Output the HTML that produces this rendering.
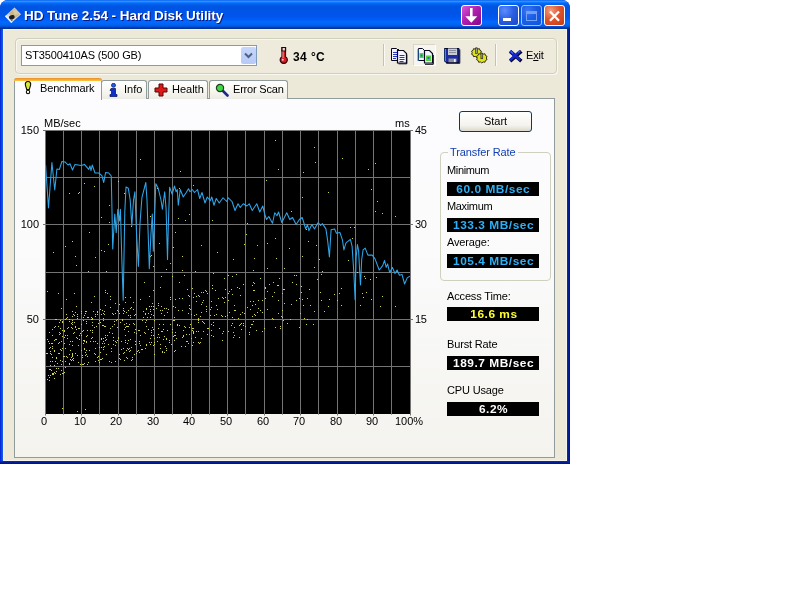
<!DOCTYPE html>
<html>
<head>
<meta charset="utf-8">
<title>HD Tune 2.54 - Hard Disk Utility</title>
<style>
html,body{margin:0;padding:0;background:#fff;}
body{width:800px;height:600px;position:relative;overflow:hidden;-webkit-font-smoothing:antialiased;font-family:"Liberation Sans",sans-serif;font-size:11px;color:#000;}
.abs{position:absolute;}
#win{position:absolute;left:0;top:0;width:570px;height:464px;background:#0831d9;border-radius:8px 8px 0 0;overflow:hidden;}
#title{position:absolute;left:0;top:0;width:570px;height:29px;
 background:linear-gradient(to bottom,#0058ee 0%,#3593ff 4%,#288eff 6%,#127dff 8%,#036ffc 10%,#0262ee 14%,#0057e5 20%,#0054e3 24%,#0055eb 56%,#005bf5 66%,#026afe 76%,#0062ef 86%,#0052d6 92%,#0040ab 94%,#003092 100%);}
#title .txt{position:absolute;left:24px;top:8px;color:#fff;font-weight:bold;font-size:13.5px;line-height:16px;white-space:nowrap;text-shadow:1px 1px 0 #0a1883;letter-spacing:-0.05px;}
#client{position:absolute;left:3px;top:29px;width:564px;height:432px;box-sizing:border-box;background:#ece9d8;border:1px solid #f4f3ec;}
.lb{position:absolute;left:0;top:29px;width:3px;height:435px;background:linear-gradient(to right,#0019cf 0,#0a3ee0 1px,#1660ea 3px);}
.rb{position:absolute;left:567px;top:29px;width:3px;height:435px;background:linear-gradient(to right,#0830b8 0,#04209c 1px,#001284 3px);}
.bb{position:absolute;left:0;top:461px;width:570px;height:3px;background:linear-gradient(to bottom,#0830b8 0,#04209c 1px,#001284 3px);}
.cbtn{position:absolute;top:5px;width:21px;height:21px;border-radius:3px;border:1px solid #fff;box-sizing:border-box;}
.blue{background:radial-gradient(circle at 30% 25%,#5b8dff 0%,#2a5fe3 45%,#1a47c8 100%);}
.red{background:radial-gradient(circle at 30% 25%,#f0a080 0%,#e0552c 45%,#c23a18 100%);}
.purp{background:linear-gradient(135deg,#d858d8 0%,#b020b0 45%,#86088a 100%);}
/* toolbar group */
#tbgrp{position:absolute;left:15px;top:38px;width:542px;height:36px;border:1px solid #d0d0bf;border-radius:4px;box-sizing:border-box;background:#eeebdd;box-shadow:1px 1px 0 #f8f7f0, inset 1px 1px 0 #f8f7f0;}
#combo{position:absolute;left:21px;top:45px;width:236px;height:21px;box-sizing:border-box;border:1px solid #7f9db9;background:#fff;}
#combo .t{position:absolute;left:3px;top:3px;font-size:11px;line-height:13px;white-space:nowrap;letter-spacing:-0.15px;}
#combo .dd{position:absolute;right:0px;top:1px;width:15px;height:17px;border-radius:2px;background:linear-gradient(to bottom,#c6d6fc,#b7c9f7);}
.sep{position:absolute;top:44px;width:1px;height:22px;background:#c5c2b0;border-right:1px solid #fbfaf4;}
/* tabs */
.tab{position:absolute;top:80px;height:19px;box-sizing:border-box;border:1px solid #919b9c;border-bottom:none;border-radius:3px 3px 0 0;background:linear-gradient(to bottom,#ffffff 0%,#f6f5ef 60%,#ecebe4 100%);}
.tab.sel{top:78px;height:22px;background:#fcfcfe;border-top:none;z-index:3;}
.tab.sel:before{content:"";position:absolute;left:-1px;right:-1px;top:0;height:3px;border-radius:3px 3px 0 0;background:linear-gradient(to bottom,#e68b2c,#ffc73c);}
.tab .l{position:absolute;top:2px;font-size:11px;line-height:13px;white-space:nowrap;}
.tab.sel .l{top:4px;}
#pane{position:absolute;left:14px;top:98px;width:541px;height:360px;box-sizing:border-box;border:1px solid #919b9c;background:linear-gradient(to bottom,#fcfcfe 0%,#fbfbfc 40%,#f4f3ee 100%);}
.ax{position:absolute;font-size:11px;line-height:11px;white-space:nowrap;color:#000;}
.lbl{position:absolute;left:447px;font-size:11px;line-height:11px;white-space:nowrap;letter-spacing:-0.15px;}
.box{position:absolute;left:447px;width:92px;height:14px;background:#000;text-align:center;font-weight:bold;font-size:11px;line-height:14px;white-space:nowrap;}
.box span{display:inline-block;transform:scaleX(1.08);letter-spacing:0.5px;margin-left:1px;}
#grp{position:absolute;left:440px;top:152px;width:111px;height:129px;box-sizing:border-box;border:1px solid #d0d0bf;border-radius:4px;}
#grp .cap{position:absolute;left:7px;top:-6px;padding:0 2px;background:#fafafb;color:#1440b4;letter-spacing:-0.1px;font-size:11px;line-height:11px;white-space:nowrap;}
#start{position:absolute;left:459px;top:111px;width:73px;height:21px;box-sizing:border-box;border:1px solid #003c74;border-radius:3px;background:linear-gradient(to bottom,#ffffff 0%,#f4f3ee 70%,#dcd8cc 100%);text-align:center;font-size:11px;line-height:19px;}
</style>
</head>
<body>
<div id="root" style="position:absolute;left:0;top:0;width:800px;height:600px;will-change:transform;">
<div id="win">
  <div id="title">
    <svg class="abs" style="left:0;top:0" width="30" height="29" viewBox="0 0 30 29">
      <path d="M14.500 7.500L21 14.300L11.300 23L5 16.300Z" fill="#cfd8ea"/>
      <path d="M14.600 8.600L19.800 14.200L14.200 19.200L8.600 13.600Z" fill="#c9b488"/>
      <path d="M12.500 10.500L16.500 9.800L18.800 13.800L15 15.500Z" fill="#d8c9a4"/>
      <ellipse cx="11.800" cy="17.300" rx="2.900" ry="2.100" fill="#1c1c20" transform="rotate(-20 11.800 17.300)"/>
      <path d="M9.500 19.200L13.200 19.400L11.300 21.800Z" fill="#5a6a4c"/>
      <path d="M5 16.300L11.300 23L12.300 22L6.200 15.200Z" fill="#eef2fa"/>
    </svg>
    <div class="txt">HD Tune 2.54 - Hard Disk Utility</div>
    <div class="cbtn purp" style="left:461px">
      <svg class="abs" style="left:0;top:0" width="19" height="19" viewBox="0 0 19 19"><path d="M9.300 2V13" stroke="#fff" stroke-width="2.600" fill="none"/><path d="M3.300 10.200h12l-6 6.600z" fill="#fff"/></svg>
    </div>
    <div class="cbtn blue" style="left:498px"><div class="abs" style="left:4px;top:12px;width:8px;height:3px;background:#fff"></div></div>
    <div class="cbtn blue" style="left:521px;opacity:.62"><div class="abs" style="left:4px;top:5px;width:11px;height:10px;border:1px solid #b9cdf6;border-top-width:3px;box-sizing:border-box"></div></div>
    <div class="cbtn red" style="left:544px">
      <svg class="abs" style="left:0;top:0" width="19" height="19" viewBox="0 0 19 19"><path d="M5 5.500L14 14.800M14 5.500L5 14.800" stroke="#fff" stroke-width="2.300" fill="none"/></svg>
    </div>
  </div>
  <div id="client"></div>
  <div class="lb"></div><div class="rb"></div><div class="bb"></div>
</div>

<!-- toolbar -->
<div id="tbgrp"></div>
<div id="combo"><div class="t">ST3500410AS (500 GB)</div>
  <div class="dd"><svg class="abs" style="left:0;top:0" width="15" height="17" viewBox="0 0 15 17"><path d="M4 6.5L7.5 10L11 6.5" stroke="#4d6185" stroke-width="2" fill="none"/></svg></div>
</div>
<!-- thermometer -->
<svg class="abs" style="left:278px;top:46px" width="12" height="19" viewBox="0 0 12 19">
  <path d="M4 1.500h3.500v9.200a3.600 3.600 0 1 1 -3.500 0z" fill="#dc1820" stroke="#2a0608" stroke-width="1.200"/>
  <path d="M4 1.500h3.500v3.500h-3.500z" fill="#f4d8d8" stroke="#2a0608" stroke-width="1.200"/>
  <path d="M5 5.500v6.500" stroke="#f8a8a8" stroke-width="1" fill="none"/>
  <circle cx="4.800" cy="13.800" r="1" fill="#fbd0d0"/>
</svg>
<div class="abs" style="left:293px;top:50px;font-weight:bold;font-size:12px;line-height:14px;white-space:nowrap;letter-spacing:0.4px;">34 °C</div>
<div class="sep" style="left:383px"></div>
<!-- icons -->
<div class="abs" style="left:413px;top:44px;width:23px;height:22px;box-sizing:border-box;border:1px solid #d9d6c8;background:#f6f5ef;border-right-color:#fdfdfa;border-bottom-color:#fdfdfa;"></div>
<svg class="abs" style="left:385px;top:42px" width="140" height="26" viewBox="385 42 140 26">
  <!-- copy text -->
  <path d="M391.500 48.500h5l2 2v10h-7z" fill="#f4f4ff" stroke="#08081c" stroke-width="1"/>
  <path d="M398.500 49v12.500" stroke="#08081c" stroke-width="1"/>
  <path d="M393 52.500h4M393 54.500h4M393 56.500h4M393 58.500h3" stroke="#2834c4" stroke-width="1"/>
  <path d="M397.500 50.500h6l3 3v9.500h-9z" fill="#f4f4ff" stroke="#08081c" stroke-width="1.200"/>
  <path d="M406.800 54.500v9.300h-8.300" stroke="#08081c" stroke-width="1" fill="none"/>
  <path d="M399.500 55.500h5M399.500 57.500h5M399.500 59.500h5M399.500 61.500h4" stroke="#2834c4" stroke-width="1"/>
  <!-- copy image -->
  <path d="M418.500 48.500h4l2 2v10h-6z" fill="#f4f4ff" stroke="#08081c" stroke-width="1"/>
  <rect x="419.500" y="53" width="4" height="5" fill="#58d040"/>
  <path d="M418 49v12" stroke="#2c80e0" stroke-width="1"/>
  <path d="M424.500 50.500h5l3 3v9.500h-8z" fill="#f4f4ff" stroke="#08081c" stroke-width="1.200"/>
  <path d="M433.300 55v9.300h-8.300" stroke="#08081c" stroke-width="1" fill="none"/>
  <rect x="426" y="55.500" width="5" height="5.500" fill="#58d040"/>
  <rect x="427.500" y="57" width="2" height="2" fill="#2868d8"/><rect x="420.500" y="54.500" width="2" height="2" fill="#2868d8"/>
  <!-- floppy -->
  <path d="M444.500 48.500h14.500v14h-13l-1.500 -1.500z" fill="#1c2ca4" stroke="#060a30" stroke-width="1"/>
  <path d="M445.300 49v12" stroke="#3ca0e8" stroke-width="1.200"/>
  <rect x="448" y="48.500" width="9" height="6.500" fill="#c8ccd4"/>
  <path d="M449 50.500h7M449 52.500h7" stroke="#8c909c" stroke-width="1"/>
  <rect x="448.500" y="58.500" width="8" height="3.800" fill="#8c909c"/>
  <rect x="454" y="59" width="1.600" height="3" fill="#f4f4f4"/>
  <path d="M459.800 49.500v13.800h-13.500" stroke="#060a30" stroke-width="1" fill="none"/>
  <!-- gears -->
  <g stroke="#20200a" stroke-width="1.100">
   <path transform="translate(476.500 52.700) scale(.82) translate(-476.500 -53.500)" d="M476.500 47.800l1.600 1.200l2-.4l.6 2l1.800 1l-.8 1.900l.8 1.900l-1.800 1l-.6 2l-2-.4l-1.600 1.200l-1.600-1.200l-2 .4l-.6-2l-1.800-1l.8-1.900l-.8-1.900l1.800-1l.6-2l2 .4z" fill="#e2e218"/>
   <path transform="translate(481.800 58) scale(.82) translate(-481.500 -58.400)" d="M481.500 52.300l1.700 1.300l2.100-.4l.7 2.100l1.900 1.100l-.9 2l.9 2l-1.900 1.100l-.7 2.100l-2.100-.4l-1.700 1.300l-1.700-1.300l-2.100.4l-.7-2.100l-1.900-1.100l.9-2l-.9-2l1.900-1.100l.7-2.100l2.100.4z" fill="#e2e218"/>
  </g>
  <rect x="475.600" y="48" width="1.800" height="5.500" fill="#98a094" stroke="#30342c" stroke-width=".7"/>
  <rect x="480.900" y="53.200" width="1.800" height="5.500" fill="#98a094" stroke="#30342c" stroke-width=".7"/>
  <!-- exit X -->
  <path d="M511.500 52.500L520 60M520 52.500L511.500 60" stroke="#05051c" stroke-width="3.600" stroke-linecap="square"/>
  <path d="M511 51.800L519.300 59.300M519.300 51.800L511 59.300" stroke="#1424cc" stroke-width="2.700" stroke-linecap="square"/>
  <path d="M510.600 51.300L513 53.400M518.200 52.400L519.700 51.200" stroke="#5c8cf0" stroke-width="1"/>
</svg>
<div class="sep" style="left:495px"></div>
<div class="abs" style="left:526px;top:49px;letter-spacing:-0.2px;font-size:11px;line-height:13px;white-space:nowrap;">E<u>x</u>it</div>

<!-- tabs -->
<div id="pane"></div>
<div class="tab sel" style="left:14px;width:88px;">
  <svg class="abs" style="left:8px;top:2px" width="10" height="16" viewBox="0 0 10 16"><path d="M5 1.500c2.200 0 3 1.800 2.600 3.600l-1.300 4.400h-2.600l-1.300 -4.400c-.4 -1.800 .4 -3.600 2.600 -3.600z" fill="#d8e838" stroke="#0c0c04" stroke-width="1.100"/><circle cx="5" cy="12" r="1.700" fill="#fff" stroke="#0c0c04" stroke-width="1.100"/></svg>
  <div class="l" style="left:25px;letter-spacing:-0.15px">Benchmark</div>
</div>
<div class="tab" style="left:101px;width:46px;">
  <svg class="abs" style="left:7px;top:2px" width="9" height="14" viewBox="0 0 9 14"><circle cx="4.500" cy="2.300" r="2" fill="#2060e8" stroke="#0a1a70" stroke-width="0.800"/><path d="M2 5.500h4.500v6h1.500v2h-7v-2h1.500v-4h-1.500z" fill="#1030c8" stroke="#0a1a70" stroke-width="0.800"/></svg>
  <div class="l" style="left:22px">Info</div>
</div>
<div class="tab" style="left:148px;width:60px;">
  <svg class="abs" style="left:5px;top:2px" width="14" height="14" viewBox="0 0 14 14"><path d="M5 1h4v4h4v4h-4v4h-4v-4h-4v-4h4z" fill="#e01818" stroke="#500808" stroke-width="1"/></svg>
  <div class="l" style="left:23px">Health</div>
</div>
<div class="tab" style="left:209px;width:79px;">
  <svg class="abs" style="left:5px;top:2px" width="14" height="14" viewBox="0 0 14 14"><path d="M7.500 7.500L12.500 12.500" stroke="#1a2a90" stroke-width="2.600" stroke-linecap="round"/><circle cx="5" cy="5" r="3.600" fill="#40d848" stroke="#204020" stroke-width="1.200"/></svg>
  <div class="l" style="left:23px;letter-spacing:-0.2px">Error Scan</div>
</div>

<!-- chart -->
<svg class="chart" width="420" height="300" viewBox="20 125 420 300" style="position:absolute;left:20px;top:125px">
<rect x="45.0" y="130.0" width="366.0" height="284.0" fill="#000"/>
<path d="M45.5 130.0V415.5M63.5 130.0V414.7M81.5 130.0V415.5M99.5 130.0V414.7M118.5 130.0V415.5M136.5 130.0V414.7M154.5 130.0V415.5M172.5 130.0V414.7M191.5 130.0V415.5M209.5 130.0V414.7M227.5 130.0V415.5M245.5 130.0V414.7M264.5 130.0V415.5M282.5 130.0V414.7M300.5 130.0V415.5M318.5 130.0V414.7M337.5 130.0V415.5M355.5 130.0V414.7M373.5 130.0V415.5M391.5 130.0V414.7M410.5 130.0V415.5M43.0 130.5H413.0M45.0 177.5H411.0M43.0 224.5H413.0M45.0 272.5H411.0M43.0 319.5H413.0M45.0 366.5H411.0" stroke="#747474" stroke-width="1" fill="none"/>
<path d="M171 344h1v1h-1zM100 359h1v1h-1zM121 341h1v1h-1zM284 303h1v1h-1zM303 305h1v1h-1zM275 327h1v1h-1zM145 313h1v1h-1zM243 325h1v1h-1zM104 311h1v1h-1zM113 340h1v1h-1zM49 380h1v1h-1zM66 356h1v1h-1zM233 332h1v1h-1zM175 307h1v1h-1zM217 309h1v1h-1zM102 343h1v1h-1zM119 358h1v1h-1zM283 320h1v1h-1zM95 341h1v1h-1zM173 320h1v1h-1zM139 343h1v1h-1zM76 329h1v1h-1zM194 315h1v1h-1zM123 313h1v1h-1zM86 350h1v1h-1zM49 377h1v1h-1zM147 317h1v1h-1zM229 312h1v1h-1zM301 292h1v1h-1zM81 335h1v1h-1zM64 356h1v1h-1zM92 332h1v1h-1zM113 337h1v1h-1zM69 319h1v1h-1zM134 324h1v1h-1zM282 293h1v1h-1zM100 309h1v1h-1zM72 353h1v1h-1zM154 320h1v1h-1zM321 300h1v1h-1zM222 333h1v1h-1zM283 289h1v1h-1zM240 324h1v1h-1zM153 309h1v1h-1zM267 309h1v1h-1zM119 313h1v1h-1zM72 322h1v1h-1zM184 326h1v1h-1zM161 306h1v1h-1zM52 373h1v1h-1zM219 328h1v1h-1zM198 318h1v1h-1zM111 348h1v1h-1zM363 297h1v1h-1zM159 324h1v1h-1zM52 343h1v1h-1zM125 327h1v1h-1zM95 361h1v1h-1zM60 333h1v1h-1zM64 330h1v1h-1zM153 335h1v1h-1zM253 301h1v1h-1zM280 328h1v1h-1zM207 334h1v1h-1zM166 350h1v1h-1zM395 306h1v1h-1zM255 315h1v1h-1zM317 279h1v1h-1zM106 354h1v1h-1zM192 328h1v1h-1zM160 348h1v1h-1zM67 317h1v1h-1zM136 333h1v1h-1zM264 328h1v1h-1zM166 339h1v1h-1zM71 360h1v1h-1zM321 274h1v1h-1zM123 353h1v1h-1zM120 359h1v1h-1zM123 308h1v1h-1zM65 335h1v1h-1zM189 327h1v1h-1zM223 298h1v1h-1zM122 319h1v1h-1zM169 340h1v1h-1zM73 314h1v1h-1zM67 328h1v1h-1zM72 328h1v1h-1zM200 316h1v1h-1zM162 352h1v1h-1zM314 311h1v1h-1zM190 309h1v1h-1zM52 357h1v1h-1zM55 326h1v1h-1zM52 361h1v1h-1zM203 331h1v1h-1zM211 330h1v1h-1zM104 314h1v1h-1zM69 344h1v1h-1zM99 320h1v1h-1zM265 298h1v1h-1zM59 334h1v1h-1zM83 340h1v1h-1zM218 298h1v1h-1zM168 309h1v1h-1zM50 361h1v1h-1zM151 306h1v1h-1zM87 356h1v1h-1zM241 329h1v1h-1zM59 332h1v1h-1zM232 294h1v1h-1zM49 348h1v1h-1zM163 324h1v1h-1zM239 337h1v1h-1zM50 347h1v1h-1zM123 310h1v1h-1zM143 311h1v1h-1zM71 357h1v1h-1zM192 330h1v1h-1zM196 314h1v1h-1zM190 324h1v1h-1zM239 288h1v1h-1zM163 329h1v1h-1zM112 313h1v1h-1zM146 308h1v1h-1zM128 331h1v1h-1zM124 360h1v1h-1zM142 349h1v1h-1zM364 276h1v1h-1zM221 315h1v1h-1zM87 335h1v1h-1zM170 324h1v1h-1zM117 319h1v1h-1zM252 305h1v1h-1zM193 331h1v1h-1zM79 339h1v1h-1zM116 320h1v1h-1zM58 353h1v1h-1zM107 335h1v1h-1zM126 323h1v1h-1zM139 330h1v1h-1zM133 309h1v1h-1zM91 317h1v1h-1zM54 365h1v1h-1zM117 310h1v1h-1zM69 363h1v1h-1zM244 313h1v1h-1zM273 319h1v1h-1zM272 296h1v1h-1zM77 318h1v1h-1zM228 300h1v1h-1zM98 356h1v1h-1zM62 322h1v1h-1zM203 292h1v1h-1zM151 330h1v1h-1zM47 339h1v1h-1zM225 316h1v1h-1zM125 342h1v1h-1zM211 324h1v1h-1zM87 364h1v1h-1zM118 337h1v1h-1zM328 306h1v1h-1zM105 335h1v1h-1zM279 278h1v1h-1zM77 314h1v1h-1zM253 321h1v1h-1zM301 286h1v1h-1zM186 341h1v1h-1zM146 309h1v1h-1zM72 354h1v1h-1zM231 289h1v1h-1zM114 324h1v1h-1zM262 331h1v1h-1zM93 341h1v1h-1zM273 282h1v1h-1zM103 320h1v1h-1zM265 287h1v1h-1zM277 285h1v1h-1zM139 341h1v1h-1zM118 311h1v1h-1zM187 341h1v1h-1zM123 348h1v1h-1zM250 327h1v1h-1zM290 319h1v1h-1zM174 335h1v1h-1zM81 350h1v1h-1zM129 351h1v1h-1zM164 352h1v1h-1zM192 345h1v1h-1zM86 336h1v1h-1zM214 315h1v1h-1zM55 373h1v1h-1zM72 345h1v1h-1zM130 315h1v1h-1zM153 329h1v1h-1zM93 311h1v1h-1zM166 308h1v1h-1zM90 330h1v1h-1zM150 338h1v1h-1zM287 323h1v1h-1zM274 292h1v1h-1zM191 338h1v1h-1zM265 288h1v1h-1zM64 337h1v1h-1zM183 336h1v1h-1zM179 325h1v1h-1zM227 315h1v1h-1zM188 295h1v1h-1zM50 353h1v1h-1zM194 293h1v1h-1zM175 332h1v1h-1zM382 296h1v1h-1zM134 332h1v1h-1zM210 315h1v1h-1zM360 305h1v1h-1zM262 312h1v1h-1zM299 327h1v1h-1zM176 338h1v1h-1zM112 333h1v1h-1zM83 330h1v1h-1zM88 317h1v1h-1zM154 338h1v1h-1zM48 375h1v1h-1zM87 330h1v1h-1zM296 284h1v1h-1zM61 341h1v1h-1zM86 321h1v1h-1zM235 310h1v1h-1zM128 315h1v1h-1zM74 322h1v1h-1zM112 313h1v1h-1zM94 327h1v1h-1zM199 343h1v1h-1zM238 318h1v1h-1zM253 290h1v1h-1zM117 327h1v1h-1zM104 326h1v1h-1zM131 360h1v1h-1zM75 326h1v1h-1zM128 331h1v1h-1zM98 360h1v1h-1zM85 352h1v1h-1zM272 318h1v1h-1zM86 354h1v1h-1zM85 313h1v1h-1zM130 339h1v1h-1zM133 323h1v1h-1zM80 333h1v1h-1zM101 359h1v1h-1zM231 325h1v1h-1zM84 349h1v1h-1zM115 361h1v1h-1zM282 317h1v1h-1zM96 326h1v1h-1zM95 348h1v1h-1zM125 335h1v1h-1zM136 353h1v1h-1zM61 364h1v1h-1zM49 332h1v1h-1zM329 299h1v1h-1zM72 316h1v1h-1zM140 345h1v1h-1zM206 291h1v1h-1zM206 311h1v1h-1zM234 310h1v1h-1zM52 373h1v1h-1zM72 341h1v1h-1zM62 336h1v1h-1zM199 296h1v1h-1zM132 359h1v1h-1zM366 292h1v1h-1zM139 343h1v1h-1zM234 319h1v1h-1zM173 306h1v1h-1zM376 277h1v1h-1zM69 364h1v1h-1zM56 339h1v1h-1zM60 360h1v1h-1zM158 334h1v1h-1zM46 353h1v1h-1zM161 331h1v1h-1zM185 346h1v1h-1zM254 290h1v1h-1zM182 298h1v1h-1zM193 332h1v1h-1zM126 350h1v1h-1zM158 303h1v1h-1zM62 330h1v1h-1zM103 313h1v1h-1zM54 350h1v1h-1zM88 362h1v1h-1zM86 341h1v1h-1zM82 331h1v1h-1zM181 346h1v1h-1zM56 371h1v1h-1zM135 341h1v1h-1zM178 310h1v1h-1zM49 369h1v1h-1zM99 347h1v1h-1zM117 340h1v1h-1zM223 331h1v1h-1zM207 293h1v1h-1zM129 348h1v1h-1zM59 322h1v1h-1zM139 352h1v1h-1zM213 336h1v1h-1zM166 348h1v1h-1zM196 331h1v1h-1zM115 313h1v1h-1zM83 343h1v1h-1zM148 329h1v1h-1zM157 337h1v1h-1zM281 316h1v1h-1zM50 375h1v1h-1zM128 326h1v1h-1zM65 361h1v1h-1zM186 334h1v1h-1zM151 332h1v1h-1zM52 335h1v1h-1zM64 372h1v1h-1zM309 289h1v1h-1zM61 350h1v1h-1zM111 362h1v1h-1zM153 306h1v1h-1zM71 323h1v1h-1zM50 369h1v1h-1zM250 327h1v1h-1zM124 324h1v1h-1zM54 340h1v1h-1zM100 322h1v1h-1zM138 330h1v1h-1zM301 286h1v1h-1zM198 295h1v1h-1zM101 347h1v1h-1zM241 323h1v1h-1zM102 325h1v1h-1zM249 332h1v1h-1zM124 329h1v1h-1zM154 344h1v1h-1zM109 361h1v1h-1zM177 325h1v1h-1zM52 346h1v1h-1zM62 348h1v1h-1zM198 331h1v1h-1zM51 343h1v1h-1zM175 350h1v1h-1zM129 324h1v1h-1zM146 344h1v1h-1zM97 314h1v1h-1zM200 342h1v1h-1zM167 330h1v1h-1zM94 353h1v1h-1zM75 327h1v1h-1zM128 349h1v1h-1zM50 365h1v1h-1zM72 356h1v1h-1zM202 302h1v1h-1zM179 298h1v1h-1zM130 350h1v1h-1zM202 321h1v1h-1zM97 312h1v1h-1zM232 317h1v1h-1zM205 290h1v1h-1zM234 335h1v1h-1zM282 310h1v1h-1zM60 328h1v1h-1zM86 311h1v1h-1zM55 361h1v1h-1zM215 290h1v1h-1zM83 364h1v1h-1zM97 343h1v1h-1zM157 337h1v1h-1zM222 340h1v1h-1zM183 330h1v1h-1zM52 374h1v1h-1zM51 370h1v1h-1zM162 310h1v1h-1zM72 345h1v1h-1zM291 304h1v1h-1zM158 305h1v1h-1zM213 322h1v1h-1zM60 374h1v1h-1zM148 313h1v1h-1zM80 364h1v1h-1zM306 324h1v1h-1zM57 363h1v1h-1zM83 317h1v1h-1zM166 338h1v1h-1zM52 348h1v1h-1zM189 308h1v1h-1zM173 336h1v1h-1zM365 278h1v1h-1zM58 343h1v1h-1zM54 378h1v1h-1zM198 319h1v1h-1zM52 329h1v1h-1zM154 342h1v1h-1zM144 332h1v1h-1zM56 368h1v1h-1zM75 327h1v1h-1zM71 327h1v1h-1zM108 344h1v1h-1zM172 332h1v1h-1zM78 362h1v1h-1zM211 301h1v1h-1zM193 342h1v1h-1zM307 298h1v1h-1zM170 299h1v1h-1zM62 321h1v1h-1zM188 343h1v1h-1zM258 308h1v1h-1zM90 341h1v1h-1zM198 322h1v1h-1zM105 326h1v1h-1zM83 320h1v1h-1zM97 357h1v1h-1zM69 354h1v1h-1zM115 341h1v1h-1zM85 355h1v1h-1zM193 333h1v1h-1zM229 291h1v1h-1zM113 344h1v1h-1zM152 303h1v1h-1zM127 348h1v1h-1zM74 332h1v1h-1zM47 379h1v1h-1zM134 315h1v1h-1zM69 321h1v1h-1zM300 313h1v1h-1zM245 326h1v1h-1zM50 351h1v1h-1zM56 358h1v1h-1zM65 348h1v1h-1zM189 305h1v1h-1zM53 374h1v1h-1zM110 328h1v1h-1zM204 323h1v1h-1zM234 327h1v1h-1zM191 314h1v1h-1zM100 352h1v1h-1zM341 305h1v1h-1zM95 354h1v1h-1zM174 340h1v1h-1zM76 337h1v1h-1zM280 326h1v1h-1zM152 327h1v1h-1zM102 358h1v1h-1zM224 302h1v1h-1zM149 342h1v1h-1zM175 299h1v1h-1zM174 320h1v1h-1zM162 331h1v1h-1zM65 319h1v1h-1zM160 344h1v1h-1zM86 354h1v1h-1zM357 272h1v1h-1zM145 314h1v1h-1zM150 309h1v1h-1zM137 351h1v1h-1zM334 294h1v1h-1zM101 314h1v1h-1zM262 300h1v1h-1zM158 328h1v1h-1zM232 323h1v1h-1zM124 311h1v1h-1zM250 309h1v1h-1zM74 315h1v1h-1zM211 335h1v1h-1zM54 327h1v1h-1zM132 357h1v1h-1zM56 357h1v1h-1zM59 342h1v1h-1zM71 360h1v1h-1zM77 355h1v1h-1zM150 311h1v1h-1zM70 359h1v1h-1zM203 322h1v1h-1zM125 340h1v1h-1zM243 323h1v1h-1zM87 317h1v1h-1zM299 298h1v1h-1zM82 364h1v1h-1zM69 364h1v1h-1zM109 332h1v1h-1zM104 346h1v1h-1zM146 326h1v1h-1zM145 322h1v1h-1zM140 335h1v1h-1zM320 292h1v1h-1zM131 347h1v1h-1zM81 324h1v1h-1zM138 350h1v1h-1zM134 354h1v1h-1zM240 314h1v1h-1zM260 310h1v1h-1zM127 358h1v1h-1zM102 358h1v1h-1zM86 323h1v1h-1zM126 357h1v1h-1zM128 340h1v1h-1zM53 373h1v1h-1zM66 318h1v1h-1zM86 321h1v1h-1zM212 288h1v1h-1zM130 308h1v1h-1zM58 368h1v1h-1zM77 316h1v1h-1zM278 313h1v1h-1zM82 357h1v1h-1zM60 360h1v1h-1zM73 360h1v1h-1zM128 310h1v1h-1zM207 328h1v1h-1zM127 343h1v1h-1zM304 318h1v1h-1zM225 289h1v1h-1zM95 316h1v1h-1zM222 297h1v1h-1zM247 307h1v1h-1zM102 343h1v1h-1zM64 343h1v1h-1zM113 314h1v1h-1zM253 282h1v1h-1zM103 341h1v1h-1zM75 353h1v1h-1zM47 353h1v1h-1zM161 313h1v1h-1zM141 349h1v1h-1zM84 363h1v1h-1zM72 355h1v1h-1zM102 310h1v1h-1zM112 326h1v1h-1zM174 351h1v1h-1zM307 319h1v1h-1zM106 339h1v1h-1zM126 312h1v1h-1zM239 325h1v1h-1zM99 362h1v1h-1zM371 299h1v1h-1zM252 316h1v1h-1zM201 312h1v1h-1zM111 351h1v1h-1zM105 337h1v1h-1zM237 287h1v1h-1zM195 337h1v1h-1zM258 300h1v1h-1zM64 331h1v1h-1zM151 342h1v1h-1zM341 288h1v1h-1zM116 342h1v1h-1zM101 339h1v1h-1zM55 339h1v1h-1zM193 297h1v1h-1zM296 300h1v1h-1zM150 344h1v1h-1zM284 289h1v1h-1zM339 293h1v1h-1zM54 372h1v1h-1zM210 309h1v1h-1zM127 326h1v1h-1zM73 358h1v1h-1zM175 335h1v1h-1zM292 282h1v1h-1zM78 328h1v1h-1zM355 275h1v1h-1zM84 340h1v1h-1zM84 341h1v1h-1zM201 338h1v1h-1zM198 342h1v1h-1zM167 312h1v1h-1zM92 319h1v1h-1zM89 350h1v1h-1zM118 338h1v1h-1zM77 338h1v1h-1zM188 313h1v1h-1zM51 370h1v1h-1zM63 373h1v1h-1zM189 334h1v1h-1zM84 315h1v1h-1zM84 348h1v1h-1zM63 356h1v1h-1zM196 296h1v1h-1zM103 325h1v1h-1zM97 311h1v1h-1zM135 314h1v1h-1zM92 318h1v1h-1zM142 320h1v1h-1zM115 345h1v1h-1zM206 309h1v1h-1zM269 284h1v1h-1zM233 337h1v1h-1zM252 285h1v1h-1zM165 346h1v1h-1zM313 324h1v1h-1zM92 330h1v1h-1zM92 325h1v1h-1zM278 300h1v1h-1zM160 310h1v1h-1zM72 320h1v1h-1zM278 285h1v1h-1zM58 326h1v1h-1zM251 324h1v1h-1zM249 334h1v1h-1zM68 327h1v1h-1zM103 318h1v1h-1zM103 347h1v1h-1zM256 330h1v1h-1zM82 355h1v1h-1zM172 329h1v1h-1zM324 311h1v1h-1zM182 310h1v1h-1zM159 337h1v1h-1zM51 354h1v1h-1zM67 338h1v1h-1zM310 305h1v1h-1zM143 317h1v1h-1zM164 315h1v1h-1zM121 349h1v1h-1zM65 367h1v1h-1zM72 359h1v1h-1zM380 306h1v1h-1zM81 313h1v1h-1zM362 293h1v1h-1zM130 317h1v1h-1zM216 314h1v1h-1zM164 308h1v1h-1zM189 296h1v1h-1zM182 337h1v1h-1zM91 338h1v1h-1zM250 301h1v1h-1zM267 291h1v1h-1zM92 322h1v1h-1zM104 343h1v1h-1zM151 335h1v1h-1zM61 370h1v1h-1zM62 373h1v1h-1zM208 328h1v1h-1zM60 349h1v1h-1zM156 308h1v1h-1zM198 320h1v1h-1zM122 320h1v1h-1zM82 331h1v1h-1zM164 336h1v1h-1zM228 293h1v1h-1zM98 323h1v1h-1zM222 316h1v1h-1zM79 335h1v1h-1zM242 312h1v1h-1zM62 361h1v1h-1zM213 325h1v1h-1zM91 319h1v1h-1zM228 331h1v1h-1zM193 328h1v1h-1zM124 352h1v1h-1zM169 342h1v1h-1zM49 343h1v1h-1zM254 283h1v1h-1zM254 314h1v1h-1zM48 341h1v1h-1zM86 342h1v1h-1zM211 307h1v1h-1zM252 324h1v1h-1zM154 354h1v1h-1zM151 314h1v1h-1zM92 337h1v1h-1zM103 338h1v1h-1zM234 305h1v1h-1zM150 317h1v1h-1zM59 353h1v1h-1zM114 321h1v1h-1zM146 345h1v1h-1zM87 317h1v1h-1zM79 328h1v1h-1zM67 335h1v1h-1zM101 338h1v1h-1zM174 317h1v1h-1zM257 312h1v1h-1zM78 328h1v1h-1zM103 349h1v1h-1zM145 333h1v1h-1zM105 340h1v1h-1zM95 314h1v1h-1zM216 305h1v1h-1zM78 345h1v1h-1zM131 307h1v1h-1zM302 299h1v1h-1zM225 297h1v1h-1zM54 351h1v1h-1zM255 304h1v1h-1zM120 322h1v1h-1zM126 326h1v1h-1zM70 341h1v1h-1zM149 306h1v1h-1zM206 306h1v1h-1zM153 315h1v1h-1zM243 284h1v1h-1zM162 351h1v1h-1zM185 327h1v1h-1zM337 300h1v1h-1zM146 320h1v1h-1zM163 339h1v1h-1zM201 304h1v1h-1zM54 351h1v1h-1zM203 300h1v1h-1zM153 345h1v1h-1zM240 295h1v1h-1zM73 333h1v1h-1zM135 329h1v1h-1zM201 292h1v1h-1zM163 319h1v1h-1zM72 324h1v1h-1zM135 344h1v1h-1zM119 354h1v1h-1zM70 350h1v1h-1zM67 357h1v1h-1zM157 341h1v1h-1zM145 348h1v1h-1zM370 279h1v1h-1zM183 335h1v1h-1zM177 324h1v1h-1zM150 216h1v1h-1zM278 169h1v1h-1zM342 158h1v1h-1zM303 172h1v1h-1zM294 275h1v1h-1zM184 275h1v1h-1zM74 293h1v1h-1zM232 276h1v1h-1zM110 296h1v1h-1zM179 188h1v1h-1zM157 188h1v1h-1zM302 197h1v1h-1zM151 255h1v1h-1zM195 271h1v1h-1zM101 250h1v1h-1zM224 278h1v1h-1zM53 252h1v1h-1zM368 169h1v1h-1zM101 217h1v1h-1zM244 244h1v1h-1zM377 201h1v1h-1zM291 211h1v1h-1zM166 269h1v1h-1zM246 234h1v1h-1zM371 189h1v1h-1zM180 171h1v1h-1zM108 244h1v1h-1zM275 238h1v1h-1zM118 181h1v1h-1zM267 243h1v1h-1zM159 243h1v1h-1zM193 185h1v1h-1zM58 293h1v1h-1zM78 193h1v1h-1zM315 162h1v1h-1zM254 258h1v1h-1zM140 159h1v1h-1zM79 192h1v1h-1zM185 220h1v1h-1zM89 232h1v1h-1zM245 205h1v1h-1zM187 289h1v1h-1zM124 193h1v1h-1zM170 263h1v1h-1zM72 241h1v1h-1zM76 265h1v1h-1zM109 222h1v1h-1zM375 211h1v1h-1zM94 186h1v1h-1zM201 245h1v1h-1zM212 220h1v1h-1zM75 256h1v1h-1zM189 214h1v1h-1zM85 311h1v1h-1zM314 267h1v1h-1zM375 163h1v1h-1zM109 205h1v1h-1zM253 270h1v1h-1zM328 192h1v1h-1zM115 303h1v1h-1zM95 257h1v1h-1zM314 147h1v1h-1zM322 271h1v1h-1zM133 302h1v1h-1zM228 275h1v1h-1zM212 285h1v1h-1zM150 256h1v1h-1zM266 180h1v1h-1zM178 218h1v1h-1zM69 193h1v1h-1zM105 290h1v1h-1zM131 226h1v1h-1zM91 302h1v1h-1zM182 256h1v1h-1zM153 290h1v1h-1zM233 259h1v1h-1zM153 266h1v1h-1zM149 296h1v1h-1zM106 271h1v1h-1zM354 227h1v1h-1zM66 299h1v1h-1zM257 245h1v1h-1zM130 297h1v1h-1zM217 252h1v1h-1zM247 223h1v1h-1zM182 270h1v1h-1zM140 299h1v1h-1zM61 308h1v1h-1zM308 241h1v1h-1zM173 247h1v1h-1zM179 282h1v1h-1zM192 288h1v1h-1zM236 274h1v1h-1zM105 292h1v1h-1zM84 183h1v1h-1zM144 282h1v1h-1zM276 258h1v1h-1zM110 307h1v1h-1zM395 216h1v1h-1zM76 306h1v1h-1zM175 232h1v1h-1zM65 246h1v1h-1zM125 302h1v1h-1zM81 311h1v1h-1zM160 287h1v1h-1zM60 320h1v1h-1zM119 304h1v1h-1zM302 256h1v1h-1zM161 276h1v1h-1zM66 314h1v1h-1zM55 319h1v1h-1zM125 297h1v1h-1zM47 291h1v1h-1zM316 245h1v1h-1zM170 297h1v1h-1zM269 217h1v1h-1zM184 275h1v1h-1zM284 268h1v1h-1zM94 296h1v1h-1zM72 311h1v1h-1zM289 248h1v1h-1zM104 251h1v1h-1zM306 229h1v1h-1zM319 259h1v1h-1zM350 227h1v1h-1zM110 299h1v1h-1zM172 276h1v1h-1zM75 312h1v1h-1zM105 305h1v1h-1zM267 268h1v1h-1zM88 271h1v1h-1zM107 293h1v1h-1zM260 278h1v1h-1zM382 213h1v1h-1zM213 273h1v1h-1zM56 319h1v1h-1zM275 140h1v1h-1zM348 260h1v1h-1zM352 238h1v1h-1zM296 275h1v1h-1zM77 411h1v1h-1zM85 409h1v1h-1zM62 408h1v1h-1zM196 301h1v1h-1z" fill="#d4d44a"/>
<polyline points="45.6,165 47,186 48.5,208 51.9,162.5 54.75,190 56.9,169 59.4,169.4 61.9,161.5 65,161.9 68,165 70,163.75 72.5,170 75,164.4 81.25,165.6 84.4,164.4 88.75,169.4 90,166 91,170.6 92.25,165 95,173 98.75,173 101.9,175.6 103.75,182.5 105.6,172.5 108.75,173 111.25,176 112,211.6 112.7,249 114.8,214 116.2,232.6 117.8,209.3 119.5,221 120.4,209.3 121.8,258.3 123.2,300.3 124.8,211.6 126,187 128.3,188.3 130.2,200 131.8,225.6 133.5,200 134.9,191.8 136.5,232.6 138.4,266.5 140,223.3 141.9,197.7 145.8,182.5 147,200 148.6,246.6 149.3,268.8 150.9,235 152.3,214 153.3,251.3 154.4,223.3 155.8,183.7 158.2,188.3 161,200 162.4,209.3 164.7,191.8 166.1,209.3 167.5,259.5 168.4,223.3 169.6,187.2 172.2,194.2 174.5,186 176.1,191.8 177.25,189.5 178.3,205.25 180.25,189.5 183.25,197 186.25,192.5 188.5,188.75 190,191.75 192.25,189.5 194.5,192.5 197.5,189.5 199.75,198.5 202,192.5 205,203 207.25,197 210.25,200.75 211.75,197 214,205.25 216.25,198.5 219.25,203 223,197.75 226.75,201.5 228.25,197.75 232,201.5 235,210.5 238,203.75 240.25,207.5 243.25,203.75 247,206 249.25,203.75 252.25,210.5 256.75,203.75 259.75,212 262.75,206 265,215 266.5,219.5 268.75,216.5 272.5,223.25 274.75,212.75 277,215.75 278.5,212 281.8,222.5 286.75,212.75 289.75,219.5 292.6,217.5 296.1,224.5 299.6,219.2 302.2,217.5 305.7,228.9 307.5,224.5 308.9,230.6 311.9,224.5 314.5,228.9 318,222.7 320.6,225.4 322.4,223.6 325.9,228.9 327.6,240.2 329.4,256.9 331.1,229.7 334.6,228.9 336.4,233.2 339.9,232.4 342.5,240.2 343.9,249.9 346,242.9 350.4,239.4 352.1,246.4 353.9,273.5 355.1,299.7 356.1,257.7 357.4,244.6 358.6,250.7 359.6,270 360.5,284.9 361.7,259.5 363.1,249.9 365.2,248.1 367.9,255.1 372.2,255.1 374.9,258.6 379.2,270 382.7,265.6 384.5,260.4 386.2,267.4 387.6,263.9 389.7,272.6 392.4,267.4 395,273.5 397.1,270 399.4,275.2 402,274.4 404.6,284 407.2,277.9 409.9,276.1" fill="none" stroke="#2ea6ea" stroke-width="1.05" stroke-linejoin="round"/>
</svg>
<div class="ax" style="left:44px;top:118px;">MB/sec</div>
<div class="ax" style="left:395px;top:118px;">ms</div>
<div class="ax" style="left:20px;top:125px;width:19px;text-align:right;">150</div>
<div class="ax" style="left:20px;top:219px;width:19px;text-align:right;">100</div>
<div class="ax" style="left:20px;top:314px;width:19px;text-align:right;">50</div>
<div class="ax" style="left:415px;top:125px;letter-spacing:-0.3px">45</div>
<div class="ax" style="left:415px;top:219px;letter-spacing:-0.3px">30</div>
<div class="ax" style="left:415px;top:314px;letter-spacing:-0.3px">15</div>
<div class="ax" style="left:24px;top:416px;width:40px;text-align:center;">0</div>
<div class="ax" style="left:60px;top:416px;width:40px;text-align:center;">10</div>
<div class="ax" style="left:96px;top:416px;width:40px;text-align:center;">20</div>
<div class="ax" style="left:133px;top:416px;width:40px;text-align:center;">30</div>
<div class="ax" style="left:169px;top:416px;width:40px;text-align:center;">40</div>
<div class="ax" style="left:206px;top:416px;width:40px;text-align:center;">50</div>
<div class="ax" style="left:243px;top:416px;width:40px;text-align:center;">60</div>
<div class="ax" style="left:279px;top:416px;width:40px;text-align:center;">70</div>
<div class="ax" style="left:316px;top:416px;width:40px;text-align:center;">80</div>
<div class="ax" style="left:352px;top:416px;width:40px;text-align:center;">90</div>
<div class="ax" style="left:395px;top:416px;">100%</div>

<!-- right panel -->
<div id="start">Start</div>
<div id="grp"><div class="cap">Transfer Rate</div></div>
<div class="lbl" style="top:165px;letter-spacing:-0.35px">Minimum</div>
<div class="box" style="top:182px;color:#2fb0f4"><span>60.0 MB/sec</span></div>
<div class="lbl" style="top:201px;letter-spacing:-0.35px">Maximum</div>
<div class="box" style="top:218px;color:#2fb0f4"><span>133.3 MB/sec</span></div>
<div class="lbl" style="top:237px">Average:</div>
<div class="box" style="top:254px;color:#2fb0f4"><span>105.4 MB/sec</span></div>
<div class="lbl" style="top:291px">Access Time:</div>
<div class="box" style="top:307px;color:#ffff30"><span>16.6 ms</span></div>
<div class="lbl" style="top:339px">Burst Rate</div>
<div class="box" style="top:356px;color:#fff"><span>189.7 MB/sec</span></div>
<div class="lbl" style="top:385px">CPU Usage</div>
<div class="box" style="top:402px;color:#fff"><span>6.2%</span></div>
</div>
</body>
</html>
